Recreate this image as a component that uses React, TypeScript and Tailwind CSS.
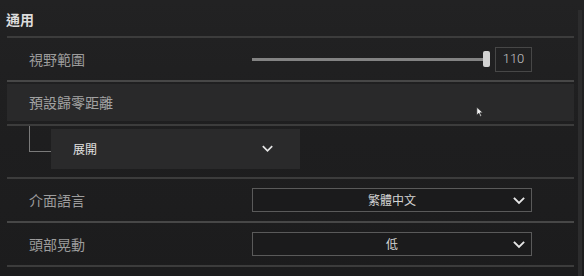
import React from 'react'

const font = { fontFamily: '"Noto Sans CJK TC", "Noto Sans", sans-serif' }

function Line({ bright = false }: { bright?: boolean }) {
  return <div className={`h-[2px] ${bright ? 'bg-[#474747]' : 'bg-[#3c3c3c]'}`} />
}

function Chevron({ className = '' }: { className?: string }) {
  return (
    <svg viewBox="0 0 12 8" className={className} fill="none">
      <path d="M1.5 1.5 L6 6 L10.5 1.5" stroke="#e6e6e6" strokeWidth="1.8" strokeLinecap="square" />
    </svg>
  )
}

function Dropdown({ value }: { value: string }) {
  return (
    <div className="relative flex h-[24px] w-[280px] items-center justify-center border border-[#5a5a5a] bg-[#1b1b1c]">
      <span className="text-[12px] text-[#d4d4d4]">{value}</span>
      <Chevron className="absolute right-[6px] top-[8px] h-[8px] w-[12px]" />
    </div>
  )
}

export default function App() {
  return (
    <div
      className="flex h-[276px] w-[584px] overflow-hidden bg-gradient-to-b from-[#222223] via-[#1e1e1f] to-[#1c1c1d]"
      style={font}
    >
      <div className="relative flex w-[574px] flex-col pl-[7px]">
        <div className="flex h-[36px] items-center -ml-[1px] pt-[2px]">
          <span className="text-[14px] font-bold text-[#dcdcdc]">通用</span>
        </div>
        <Line />

        <div className="flex h-[42px] items-center">
          <span className="w-[245px] pl-[22px] text-[14px] text-[#9c9c9c]">視野範圍</span>
          <div className="relative flex h-[16px] w-[237px] items-center">
            <div className="h-[3px] w-[233px] bg-[#838383]" />
            <div className="absolute left-[231px] top-0 h-[16px] w-[7px] rounded-[2px] bg-[#d2d2d2]" />
          </div>
          <div
            className="ml-[6px] flex h-[25px] w-[37px] items-center justify-center border border-[#474747] text-[13px] text-[#c6c6c6]"
            style={{ fontFamily: 'Roboto, "Liberation Sans", sans-serif', fontWeight: 300 }}
          >
            110
          </div>
        </div>
        <Line bright />

        <div className="mt-[2px] flex h-[37px] items-center bg-[#29292a]">
          <span className="pl-[22px] text-[14px] text-[#a2a2a2]">預設歸零距離</span>
        </div>
        <div className="mt-[3px]">
          <Line />
        </div>

        <div className="flex h-[51px]">
          <div className="ml-[22px] h-[26px] w-[22px] border-b border-l border-[#7a7a7a]" />
          <div className="mt-[3px] flex h-[40px] w-[249px] items-center justify-between bg-[#2a2a2b] pl-[22px] pr-[27px]">
            <span className="text-[12px] text-[#e2e2e2]">展開</span>
            <Chevron className="h-[8px] w-[11px]" />
          </div>
        </div>
        <Line />

        <div className="flex h-[42px] items-center">
          <span className="w-[245px] pl-[22px] text-[14px] text-[#9c9c9c]">介面語言</span>
          <Dropdown value="繁體中文" />
        </div>
        <Line bright />

        <div className="flex h-[42px] items-center">
          <span className="w-[245px] pl-[22px] text-[14px] text-[#9c9c9c]">頭部晃動</span>
          <Dropdown value="低" />
        </div>
        <Line />

        <svg viewBox="0 0 10 14" className="absolute left-[476px] top-[106px] h-[12px] w-[8px]">
          <path d="M1 1 L1 11 L3.5 8.5 L5.5 12.5 L7 11.8 L5 8 L8.5 8 Z" fill="#f2f2f2" stroke="#222" strokeWidth="0.8" />
        </svg>
      </div>
      <div className="ml-[4px] mt-[10px] h-[266px] w-[4px] bg-[#2c2c2d]" />
    </div>
  )
}
